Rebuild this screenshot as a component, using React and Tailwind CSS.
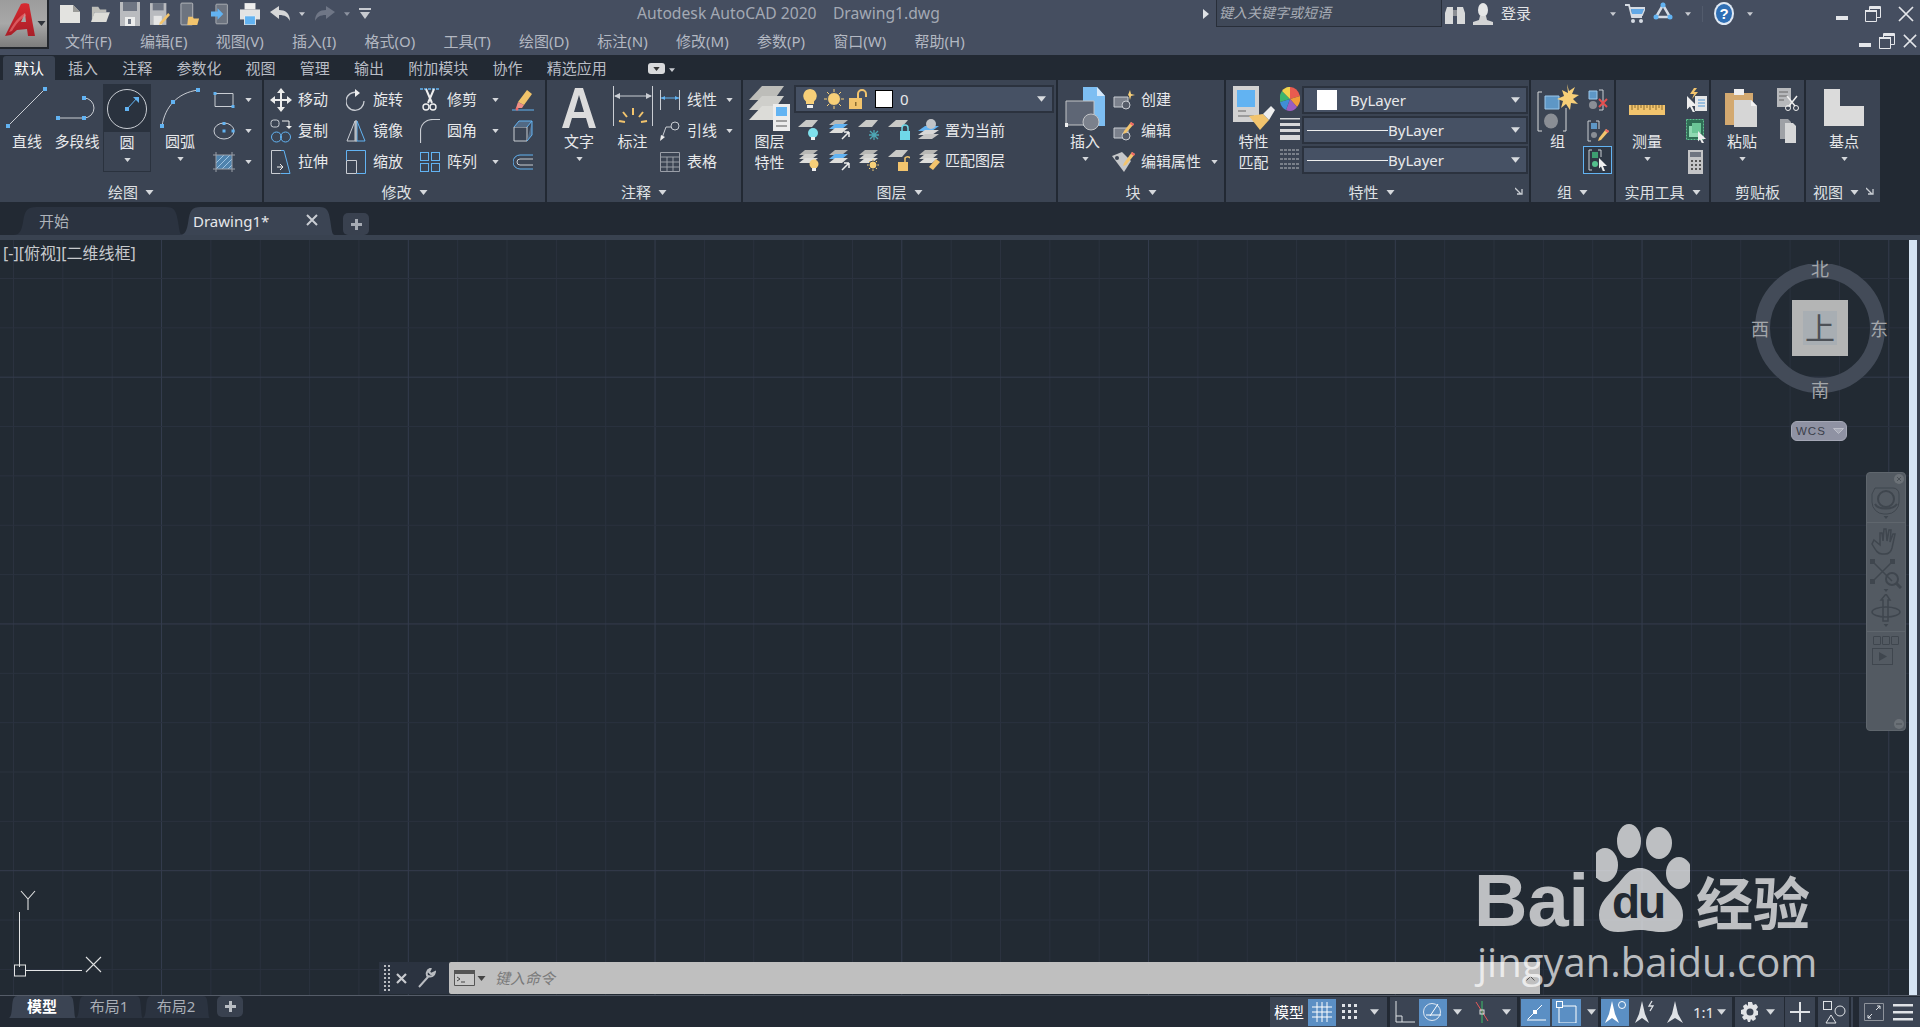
import React from 'react';

const BLUE = '#62b3f2';
const GR = '#c9cdd3';

function Caret({ w = 8, h = 5, c = '#d5d8dc' }) {
  return (
    <svg width={w} height={h} viewBox="0 0 8 5" className="shrink-0">
      <polygon points="0,0 8,0 4,5" fill={c} />
    </svg>
  );
}

function Node({ x, y, s = 4, c = BLUE }) {
  return <rect x={x - s / 2} y={y - s / 2} width={s} height={s} fill={c} />;
}

function Slot({ children }) {
  return <span className="w-[30px] flex justify-center shrink-0">{children}</span>;
}

/* ---------- quick access ---------- */
function Qat() {
  return (
    <div className="flex items-center h-[27px] pl-[6px]">
      <Slot><svg width="20" height="20" viewBox="0 0 20 20"><path d="M0 1h13l7 7v11H0z" fill="#e3e3e0" /><path d="M13 1v7h7z" fill="#9b9b98" /></svg></Slot>
      <Slot><svg width="20" height="18" viewBox="0 0 22 20"><path d="M2 2h7l2 3h7v3H5L2 18z" fill="#bdbdb8" /><path d="M5 8h17l-4 11H1z" fill="#ddddd8" /></svg></Slot>
      <Slot><svg width="20" height="24" viewBox="0 0 20 24"><path d="M0 0h20v24H0z" fill="#b9bbbf" /><path d="M3 0h14v9H3z" fill="#6e7583" /><path d="M5 15h10v9H5z" fill="#eceded" /><path d="M8 17h3v5H8z" fill="#6e7583" /></svg></Slot>
      <Slot><svg width="20" height="24" viewBox="0 0 22 24"><path d="M0 0h18v24H0z" fill="#b9bbbf" /><path d="M3 0h12v8H3z" fill="#6e7583" /><path d="M4 14h9v10H4z" fill="#e5e5e5" /><path d="M20 11l2 2-9 10-3 1 1-3z" fill="#f2c46d" /></svg></Slot>
      <Slot><svg width="20" height="24" viewBox="0 0 22 24"><rect x="1" y="0" width="13" height="24" rx="1" fill="#6d7480" stroke="#b9bbbf" /><path d="M9 15h5l1 2h6l-2 7H8z" fill="#f2c46d" /></svg></Slot>
      <Slot><svg width="18" height="24" viewBox="0 0 22 24"><rect x="6" y="0" width="14" height="24" rx="1" fill="#6d7480" stroke="#b9bbbf" /><path d="M0 9h8V5l7 7-7 7v-4H0z" fill={BLUE} /></svg></Slot>
      <Slot><svg width="20" height="22" viewBox="0 0 22 24"><path d="M5 0h12v7H5z" fill="#eee" /><path d="M0 7h22v11H0z" fill="#e3e3e3" /><path d="M5 14h12v10H5z" fill={BLUE} stroke="#eee" /></svg></Slot>
      <Slot><svg width="20" height="15" viewBox="0 0 20 15"><path d="M0 6l9-6v4c6 0 11 3 11 11-2-4-5-6-11-6v4z" fill="#d6d7d8" /></svg></Slot>
      <span className="ml-[4px]"><Caret w={6} h={4} c="#c7cad0" /></span>
      <svg width="20" height="15" viewBox="0 0 20 15" className="ml-[10px]"><path d="M20 6l-9-6v4C5 4 0 7 0 15c2-4 5-6 11-6v4z" fill="#6f7686" /></svg>
      <span className="ml-[9px]"><Caret w={6} h={4} c="#8d93a0" /></span>
      <svg width="12" height="11" viewBox="0 0 12 11" className="ml-[9px]"><path d="M0 0h12v2H0z" fill="#c7cad0" /><path d="M1 4h10l-5 7z" fill="#c7cad0" /></svg>
    </div>
  );
}

/* ---------- title and menu ---------- */
function WinButtons({ gap, mini }) {
  return (
    <div className={`flex items-center ${gap}`}>
      <svg width="12" height="4" viewBox="0 0 12 4" className="self-end mb-[2px]"><rect width="12" height="4" fill="#e4e6ea" /></svg>
      <svg width="16" height="16" viewBox="0 0 16 16"><path d="M4.500 4.500v-4h11v11h-4M.5 4.500h11v11H.5z" fill="none" stroke="#e4e6ea" /><path d="M4 1h12v2H4zM0 4h12v2H0z" fill="#e4e6ea" /></svg>
      <svg width={mini ? 14 : 16} height={mini ? 14 : 16} viewBox="0 0 16 16"><path d="M1 1l14 14M15 1L1 15" stroke="#e4e6ea" strokeWidth="1.700" /></svg>
    </div>
  );
}

function TitleBar() {
  const menus = ['文件(F)', '编辑(E)', '视图(V)', '插入(I)', '格式(O)', '工具(T)', '绘图(D)', '标注(N)', '修改(M)', '参数(P)', '窗口(W)', '帮助(H)'];
  return (
    <div className="h-[55px] bg-[#454e60] flex shrink-0">
      <div className="w-[49px] h-[49px] bg-gradient-to-b from-[#9c9c9c] via-[#a8a8a8] to-[#7d7d7d] border-r-2 border-b-2 border-[#22262d] relative shrink-0">
        <svg className="absolute left-[4px] top-[3px]" width="32" height="33" viewBox="0 0 32 33">
          <defs>
            <linearGradient id="acad" x1="0" y1="0" x2="0" y2="1">
              <stop offset="0" stopColor="#d82a30" />
              <stop offset="1" stopColor="#a81e28" />
            </linearGradient>
          </defs>
          <path fillRule="evenodd" d="M1 33L17 1c2-1 6-1 8 0l6 32h-7l-1-7-10 1-6 5zM17 19h5l-1-9z" fill="url(#acad)" />
          <path d="M5 29c5-10 10-15 16-19l1 3c-6 3-10 8-14 15z" fill="#ef7b7e" opacity=".6" />
        </svg>
        <span className="absolute left-[37px] top-[21px]"><Caret w={9} h={5} c="#30343b" /></span>
      </div>
      <div className="flex-1 flex flex-col min-w-0">
        <div className="flex h-[27px] items-center">
          <div className="w-[588px] shrink-0"><Qat /></div>
          <div className="text-[15.700px] leading-[27px] text-[#a3a9b4] w-[566px] shrink-0 whitespace-pre">{'Autodesk AutoCAD 2020    Drawing1.dwg'}</div>
          <svg width="6" height="10" viewBox="0 0 6 10" className="shrink-0"><polygon points="0,0 6,5 0,10" fill="#dfe2e6" /></svg>
          <div className="ml-[7px] w-[226px] h-[27px] border-l border-b border-r border-[#282e39] bg-[#3f4858] pl-[2px] text-[14px] leading-[25px] italic text-[#a7acb5] shrink-0">键入关键字或短语</div>
          <svg width="20" height="20" viewBox="0 0 20 20" className="ml-[3px]"><path d="M2 3h6v17H0V9zM12 3h6l2 6v11h-8z" fill="#d8d9da" /><path d="M8 6h4v6H8z" fill="#8c8f94" /></svg>
          <svg width="20" height="22" viewBox="0 0 20 22" className="ml-[8px]"><ellipse cx="10" cy="7" rx="5" ry="7" fill="#e5e6e7" /><path d="M7 13h6l1 4 6 2v3H0v-3l6-2z" fill="#d3d4d5" /></svg>
          <span className="ml-[8px] text-[15px] leading-[27px] text-[#e1e3e6] w-[109px] shrink-0">登录</span>
          <Caret w={6} h={4} c="#c7cad0" />
          <svg width="20" height="21" viewBox="0 0 20 21" className="ml-[9px]"><path d="M0 2h4l3 12h10M5 5h15l-3 7H7" fill="none" stroke="#d6dbe3" strokeWidth="1.800" /><path d="M6 6h13l-2 5H7z" fill="#62a8e6" /><circle cx="8" cy="18" r="2" fill="#d6dbe3" /><circle cx="16" cy="18" r="2" fill="#d6dbe3" /></svg>
          <svg width="20" height="18" viewBox="0 0 20 18" className="ml-[8px] mb-[6px]"><path d="M10 3L3 15h14z" fill="none" stroke="#d5dbe4" strokeWidth="2.500" /><circle cx="10" cy="3" r="2.500" fill={BLUE} /><circle cx="3" cy="15" r="2.500" fill={BLUE} /><circle cx="17" cy="15" r="2.500" fill={BLUE} /></svg>
          <span className="ml-[12px]"><Caret w={6} h={4} c="#c7cad0" /></span>
          <div className="w-px h-[16px] bg-[#525b6c] ml-[11px]" />
          <svg width="20" height="23" viewBox="0 0 20 23" className="ml-[11px]"><ellipse cx="10" cy="11.500" rx="10" ry="11.500" fill="#dfe8f3" /><ellipse cx="10" cy="11.500" rx="8" ry="9.500" fill="#2f6fb5" /><text x="10" y="17" textAnchor="middle" fontSize="15" fontWeight="700" fill="#fff" fontFamily="Liberation Sans">?</text></svg>
          <span className="ml-[13px]"><Caret w={6} h={4} c="#c7cad0" /></span>
          <div className="ml-auto mr-[6px]"><WinButtons gap="gap-[17px]" /></div>
        </div>
        <div className="flex items-center h-[28px]">
          <nav className="flex pl-[16px] gap-[28.300px] text-[15px] leading-[28px] text-[#b3b8c2]">
            {menus.map((m) => <span key={m} className="whitespace-nowrap">{m}</span>)}
          </nav>
          <div className="ml-auto mr-[3px]"><WinButtons gap="gap-[8px]" mini /></div>
        </div>
      </div>
    </div>
  );
}

/* ---------- ribbon tabs ---------- */
function RibbonTabs() {
  const tabs = ['插入', '注释', '参数化', '视图', '管理', '输出', '附加模块', '协作', '精选应用'];
  return (
    <div className="h-[25px] bg-[#222933] flex items-end pl-[3px] shrink-0">
      <div className="w-[52px] h-[24px] bg-[#3b4453] rounded-t-[3px] text-center text-[15px] leading-[24px] text-white">默认</div>
      <div className="flex pl-[13px] gap-[24.200px] text-[15px] leading-[24px] text-[#b9bdc5]">
        {tabs.map((t) => <span key={t} className="whitespace-nowrap">{t}</span>)}
      </div>
      <div className="ml-[41px] mb-[6px] w-[17px] h-[11px] rounded-[3px] bg-[#d8d9db] flex items-center justify-center"><Caret w={7} h={4} c="#333" /></div>
      <span className="ml-[4px] mb-[8px]"><Caret w={6} h={4} c="#c7cad0" /></span>
    </div>
  );
}

/* ---------- ribbon primitives ---------- */
function Panel({ w, title, more, tp = '', children }) {
  return (
    <div className={`${w} shrink-0 bg-[#3b4453] border-r-2 border-[#222933] flex flex-col relative`}>
      <div className="h-[102px] flex pt-[4px]">{children}</div>
      <div className={`h-[20px] flex items-center justify-center gap-[7px] text-[15px] leading-[20px] text-[#dfe1e4] ${tp}`}>
        <span>{title}</span>
        {more !== false && <Caret w={9} h={5} />}
      </div>
      {more === 'launch' && (
        <svg width="8" height="8" viewBox="0 0 8 8" className="absolute right-[6px] bottom-[7px]"><path d="M0 1l6 6M7 2v5H2" stroke="#c9cdd3" fill="none" strokeWidth="1.300" /></svg>
      )}
    </div>
  );
}

function Big({ w, icon, label, label2, arrow, active }) {
  return (
    <div className={`${w} shrink-0 flex flex-col items-center ${active ? 'h-[88px] border border-[#2a323e]' : ''}`}>
      <div className={`h-[47px] w-full flex items-center justify-center shrink-0 ${active ? 'bg-[#2a323e]' : ''}`}>{icon}</div>
      <div className="text-[15px] leading-[21px] text-[#e8e9eb] whitespace-nowrap">{label}</div>
      {label2 && <div className="text-[15px] leading-[21px] text-[#e8e9eb] whitespace-nowrap">{label2}</div>}
      {arrow && <div className="mt-[5px]"><Caret w={7} h={4} /></div>}
    </div>
  );
}

function Row({ icon, text, arrow, w = 'w-[24px]', ar = 'ml-auto' }) {
  return (
    <div className="h-[31px] flex items-center">
      <span className={`${w} flex justify-center shrink-0`}>{icon}</span>
      {text && <span className="ml-[5px] mb-[2px] text-[15px] leading-[20px] text-[#e8e9eb] whitespace-nowrap">{text}</span>}
      {arrow && <span className={ar}><Caret w={7} h={4} /></span>}
    </div>
  );
}

/* ---------- icons ---------- */
const Ic = {
  line: <svg width="48" height="46" viewBox="0 0 48 46"><path d="M5 41L42 4" stroke={GR} /><Node x={5} y={41} /><Node x={42} y={4} /></svg>,
  pline: <svg width="46" height="46" viewBox="0 0 46 46"><path d="M4 33h26a10 10 0 0 0 0-20" fill="none" stroke={GR} /><Node x={4} y={33} /><Node x={30} y={33} /><Node x={30} y={13} /></svg>,
  circle: <svg width="44" height="44" viewBox="0 0 44 44"><circle cx="22" cy="22" r="19.500" fill="none" stroke={GR} /><path d="M22 22l11-12" stroke={BLUE} /><path d="M28 10h6v6z" fill={BLUE} /><Node x={22} y={22} /></svg>,
  arc: <svg width="46" height="46" viewBox="0 0 46 46"><path d="M5 41C8 22 20 8 41 5" fill="none" stroke={GR} /><Node x={5} y={41} /><Node x={16} y={17} /><Node x={41} y={5} /></svg>,
  rect: <svg width="22" height="16" viewBox="0 0 22 16"><path d="M2 1.500h18v13H2z" fill="none" stroke={GR} /><Node x={2} y={1.500} s={3} /><Node x={20} y={14.500} s={3} /></svg>,
  ellipse: <svg width="22" height="18" viewBox="0 0 22 18"><ellipse cx="11" cy="9" rx="10" ry="8" fill="none" stroke={GR} /><Node x={11} y={9} s={3} /><Node x={11} y={1.500} s={3} /><Node x={20} y={9} s={3} /></svg>,
  hatch: <svg width="22" height="20" viewBox="0 0 22 20"><path d="M3 3h16v14H3z" fill="#4f83ad" /><path d="M3 11l8-8M3 17L17 3M9 17L19 7M15 17l4-4" stroke="#9fc4e2" /><path d="M3 0v20M19 0v20M0 3h22M0 17h22" stroke="#9a9fa8" /></svg>,
  move: <svg width="22" height="24" viewBox="0 0 22 24"><path d="M11 0l4 5h-3v6h5V8l5 4-5 4v-3h-5v6h3l-4 5-4-5h3v-6H5v3l-5-4 5-4v3h5V5H7z" fill="#eceded" /></svg>,
  rotate: <svg width="20" height="22" viewBox="0 0 20 22"><path d="M11 3.500A9 9 0 1 0 18 12" fill="none" stroke={GR} strokeWidth="1.300" /><path d="M9 0l5 4-5 4z" fill="#eee" /></svg>,
  trim: <svg width="20" height="24" viewBox="0 0 20 24"><path d="M0 1h20" stroke={BLUE} strokeDasharray="3 1" strokeWidth="1.500" /><path d="M6 1l6 14M14 1L8 15" stroke="#eee" strokeWidth="2" /><circle cx="6" cy="19" r="3" fill="none" stroke="#eee" strokeWidth="1.400" /><circle cx="13" cy="19" r="3" fill="none" stroke="#eee" strokeWidth="1.400" /></svg>,
  erase: <svg width="22" height="22" viewBox="0 0 22 22"><path d="M15 1l5 4-8 11-6-3z" fill="#f0c36a" /><path d="M6 13l6 3-2 3H4z" fill="#ef8f86" /><path d="M0 21h22" stroke={BLUE} /><circle cx="5" cy="20" r="1.500" fill="#e66" /></svg>,
  copy: <svg width="22" height="24" viewBox="0 0 22 24"><rect x="1" y="1" width="8" height="7" rx="2.500" fill="none" stroke={GR} /><path d="M12 2h7v6" fill="none" stroke="#eee" /><path d="M16 7h6l-3 3z" fill="#eee" /><circle cx="6.500" cy="18" r="5" fill="none" stroke={BLUE} /><circle cx="15.500" cy="18" r="5" fill="none" stroke={BLUE} /></svg>,
  mirror: <svg width="20" height="22" viewBox="0 0 20 22"><path d="M9 1L1 21h8z" fill="none" stroke={GR} /><path d="M11 1l8 20h-8z" fill="none" stroke={BLUE} /><path d="M10 0v22" stroke="#eee" /></svg>,
  fillet: <svg width="20" height="24" viewBox="0 0 20 24"><path d="M.5 24V12C.5 5 6 .5 13 .5h7" fill="none" stroke={GR} strokeWidth="1.200" /></svg>,
  cube: <svg width="20" height="22" viewBox="0 0 20 22"><path d="M1 7h13v14H1z" fill="none" stroke={GR} /><path d="M1 7l5-6h13l-5 6M14 21l5-6V1" fill="#526983" stroke={BLUE} /></svg>,
  stretch: <svg width="20" height="24" viewBox="0 0 20 24"><path d="M10 .5H.5v23h9" fill="none" stroke={GR} /><path d="M10 .5h3l6 23h-9" fill="none" stroke={BLUE} /><path d="M6 17h5M9 14l3 3-3 3" stroke="#eee" fill="none" /></svg>,
  scale: <svg width="20" height="24" viewBox="0 0 20 24"><path d="M.5 10.500h10v13H.5z" fill="none" stroke={GR} /><path d="M.5 10.500V.5h19v23h-9" fill="none" stroke={BLUE} /></svg>,
  array: <svg width="20" height="20" viewBox="0 0 20 20"><rect x=".5" y=".5" width="8" height="8" fill="none" stroke={BLUE} /><rect x="11.500" y=".5" width="8" height="8" fill="none" stroke={BLUE} /><rect x=".5" y="11.500" width="8" height="8" fill="none" stroke={BLUE} /><rect x="11.500" y="11.500" width="8" height="8" fill="none" stroke={BLUE} /></svg>,
  offset: <svg width="20" height="16" viewBox="0 0 20 16"><path d="M20 1H7a7 7 0 0 0 0 14h13" fill="none" stroke={BLUE} /><path d="M20 5H7a3 3 0 0 0 0 6h13" fill="none" stroke={GR} /></svg>,
  text: <svg width="34" height="40" viewBox="0 0 34 40"><path d="M13 0h8l13 40h-7l-3-10H10L7 40H0zM12 24h10L17 7z" fill="#dcdcdc" /></svg>,
  dim: <svg width="40" height="44" viewBox="0 0 40 44"><path d="M.5 0v40M39.500 0v40" stroke={GR} /><path d="M2 10h36" stroke={GR} /><path d="M1 10l6-3v6zM39 10l-6-3v6z" fill={GR} /><path d="M20 22v7M10 26l4 5M30 26l-4 5M6 35l6 1M34 35l-6 1" stroke="#f2c46d" strokeWidth="2" fill="none" /></svg>,
  linear: <svg width="20" height="20" viewBox="0 0 20 20"><path d="M.5 0v20M19.500 0v20" stroke={GR} /><path d="M1 8h18" stroke={BLUE} /><path d="M1 8l4-2v4zM19 8l-4-2v4z" fill={BLUE} /></svg>,
  leader: <svg width="20" height="20" viewBox="0 0 20 20"><circle cx="15" cy="5" r="4" fill="none" stroke={GR} /><path d="M11 6H6L2 17" fill="none" stroke={GR} /><path d="M0 20l1-6 4 2z" fill="#eee" /></svg>,
  table: <svg width="20" height="20" viewBox="0 0 20 20"><path d="M.5.5h19v19H.5zM.5 5h19M.5 10h19M.5 15h19M7 5v15M13 5v15" fill="none" stroke="#9a9fa8" /></svg>,
  layerProp: <svg width="42" height="46" viewBox="0 0 42 46"><path d="M13 1h22l-10 14H0z" fill="#bdbdb9" /><path d="M13 11h22l-10 14H0z" fill="#cfcfcb" /><path d="M13 21h22l-10 14H0z" fill="#dcdcd8" /><path d="M24 19h17v27H24z" fill="#ececec" /><path d="M27 22h11v9H27z" fill={BLUE} /><path d="M27 36h11M27 41h11" stroke="#555" /></svg>,
  bulb: <svg width="14" height="20" viewBox="0 0 14 20"><path d="M7 0a7 7 0 0 1 4 12.500V15H3v-2.500A7 7 0 0 1 7 0z" fill="#f7cf78" /><path d="M4 16h6v3H4z" fill="#eee" /></svg>,
  sun: <svg width="20" height="20" viewBox="0 0 20 20"><path d="M10 0v20M0 10h20M3 3l14 14M17 3L3 17" stroke="#f7cf78" /><circle cx="10" cy="10" r="6.500" fill="#f7cf78" stroke="#465164" /></svg>,
  lock: <svg width="18" height="20" viewBox="0 0 18 20"><path d="M9 9V5a4 4 0 0 1 8 0v3" fill="none" stroke="#f2c46d" strokeWidth="2" /><path d="M0 9h13v11H0z" fill="#f2c46d" /><path d="M6 13h1.500v4H6z" fill="#8a6c30" /></svg>,
  insert: <svg width="40" height="46" viewBox="0 0 40 46"><path d="M18 2h14l8 9v30H18z" fill="#7dbef2" /><path d="M32 2v9h8z" fill="#d6e9fa" /><path d="M1 16h28v24H1z" fill="#5e6675" stroke="#c2c4c7" /><circle cx="26" cy="37" r="8" fill="#7b818c" stroke="#c2c4c7" /><Node x={1} y={40} s={4} c="#eee" /></svg>,
  create: <svg width="22" height="20" viewBox="0 0 22 20"><path d="M1 7h14v10H1z" fill="#7b818c" stroke={GR} /><circle cx="13" cy="15" r="4" fill="#555c69" stroke={GR} /><path d="M15 5l2-5 1 4 4 1-4 1-1 4-1-4z" fill="#f7cf78" /></svg>,
  edit: <svg width="22" height="20" viewBox="0 0 22 20"><path d="M1 7h14v10H1z" fill="#7b818c" stroke={GR} /><circle cx="13" cy="15" r="4" fill="#555c69" stroke={GR} /><path d="M18 1l3 2-8 9-3 1 1-3z" fill="#f2c46d" /><path d="M18 1l3 2-1 2-3-2z" fill="#e66" /></svg>,
  attedit: <svg width="24" height="22" viewBox="0 0 24 22"><path d="M0 5l10-4 9 9-7 11z" fill="#c5c7c9" /><circle cx="5" cy="7" r="2" fill="#3b4453" /><path d="M20 1l3 2-9 11-3 1 1-3z" fill="#f2c46d" /><path d="M20 1l3 2-1 2-3-2z" fill="#e66" /></svg>,
  match: <svg width="42" height="44" viewBox="0 0 42 44"><path d="M0 0h26v36H0z" fill="#d2d2d2" /><path d="M4 4h18v17H4z" fill={BLUE} /><path d="M5 25h8M5 30h16" stroke="#666" /><path d="M16 30l14-2 6 6-9 10z" fill="#f2c46d" /><path d="M30 28l8-8 4 4-6 10z" fill="#eee" /></svg>,
  wheel: <svg width="20" height="24" viewBox="0 0 20 24"><path d="M10 12L10 0A10 12 0 0 1 20 9z" fill="#e95b4f" /><path d="M10 12L20 9A10 12 0 0 1 17 20z" fill="#f29b38" /><path d="M10 12L17 20A10 12 0 0 1 6 23z" fill="#9a5dc0" /><path d="M10 12L6 23A10 12 0 0 1 0 15z" fill="#3f8fd6" /><path d="M10 12L0 15A10 12 0 0 1 2 4z" fill="#3cb56e" /><path d="M10 12L2 4A10 12 0 0 1 10 0z" fill="#f2d24c" /></svg>,
  lw: <svg width="20" height="22" viewBox="0 0 20 22"><path d="M0 0h20v1.500H0zM0 5h20v3H0zM0 11h20v3H0zM0 17h20v5H0z" fill="#d7d8da" /></svg>,
  lt: <svg width="20" height="20" viewBox="0 0 20 20"><path d="M0 1h20M0 5h20M0 10h20M0 15h20M0 19h20" stroke="#b8bbc0" strokeDasharray="3 1" /></svg>,
  group: <svg width="42" height="48" viewBox="0 0 42 48"><path d="M5 8H1v39h4M26 47h3V24" fill="none" stroke="#d8d9db" /><path d="M8 12h14v13H8z" fill="#5e97c6" stroke="#9cc7ea" /><ellipse cx="14" cy="37" rx="7" ry="7.500" fill="#8a8e95" /><path d="M30 0l2 7 6-4-3 7 7 1-6 4 5 5-7-1-1 7-4-6-5 4 2-7-6-2 7-3-2-6 6 3z" fill="#f7cf78" /></svg>,
  ungroup: <svg width="20" height="22" viewBox="0 0 20 22"><path d="M11 1h4v20h-4" fill="none" stroke={GR} /><path d="M1 2h8v8H1z" fill="#5e97c6" stroke="#9cc7ea" /><circle cx="5" cy="16" r="4" fill="#8a8e95" /><path d="M11 10l8 8M19 10l-8 8" stroke="#e54f4f" strokeWidth="2" /></svg>,
  groupEdit: <svg width="22" height="22" viewBox="0 0 22 22"><path d="M4 1H1v20h3M9 1h3v8" fill="none" stroke={GR} /><path d="M4 3h6v6H4z" fill="#5e97c6" /><circle cx="7" cy="15" r="3" fill="#8a8e95" /><path d="M19 9l3 2-8 9-3 1 1-3z" fill="#f2c46d" /><path d="M19 9l3 2-1 2-3-2z" fill="#e66" /></svg>,
  groupSel: <svg width="20" height="22" viewBox="0 0 20 22"><path d="M4 1H1v20h3M10 1h3v7" fill="none" stroke={GR} /><path d="M4 3h6v6H4z" fill="#3d9d71" /><circle cx="7" cy="15" r="3" fill="#54c08e" /><path d="M11 9l8 8h-4l2 5-2 .500-2-5-2 2z" fill="#eee" /></svg>,
  ruler: <svg width="36" height="12" viewBox="0 0 36 12"><path d="M0 0h36v10H0z" fill="#f2c46d" /><path d="M3 0v5M6 0v3M9 0v5M12 0v3M15 0v5M18 0v3M21 0v5M24 0v3M27 0v5M30 0v3M33 0v5" stroke="#8a6c30" /></svg>,
  qs: <svg width="22" height="24" viewBox="0 0 22 24"><path d="M10 8h12v15H10z" fill="#e5e6e7" /><path d="M13 12h7M13 15h7M13 18h7" stroke="#4f96d6" /><path d="M2 8l10 10H7l3 6-2 .500-3-6-3 3z" fill="#eee" /><path d="M9 0L5 6h4l-2 5 6-7H9l3-4z" fill="#f2c46d" /></svg>,
  selSim: <svg width="20" height="24" viewBox="0 0 20 24"><rect x=".5" y=".5" width="17" height="20" fill="#2f6e55" stroke="#5cc08f" strokeDasharray="2 1" /><path d="M3 7h9v11H3z" fill="#8fd9b2" /><path d="M6 4h9v10H6z" fill="#6ac596" /><path d="M12 12l8 8h-4l2 4-2 .500-2-4-2 2z" fill="#eee" /></svg>,
  calc: <svg width="16" height="24" viewBox="0 0 16 24"><path d="M0 0h15v24H0z" fill="#c4c5c7" /><path d="M2 2h11v5H2z" fill="#6e7480" /><path d="M3 10h2v2H3zM7 10h2v2H7zM11 10h2v2h-2zM3 14h2v2H3zM7 14h2v2H7zM11 14h2v2h-2zM3 18h2v2H3zM7 18h2v2H7zM11 18h2v2h-2z" fill="#555" /></svg>,
  paste: <svg width="34" height="38" viewBox="0 0 34 38"><path d="M0 4h28v32H0z" fill="#d3a970" /><path d="M9 0h10v6H9z" fill="#eee" /><path d="M9 11h17l6 6v21H9z" fill="#d6d6d6" /><path d="M26 11v6h6z" fill="#f2f2f2" /></svg>,
  cut: <svg width="22" height="24" viewBox="0 0 22 24"><path d="M0 0h14v19H0z" fill="#b7b9bc" /><path d="M2 4h9M2 8h9M2 12h5" stroke="#666" /><path d="M10 8l8 10M20 8l-8 10" stroke="#eee" strokeWidth="1.500" /><circle cx="11" cy="20" r="2.500" fill="none" stroke="#eee" /><circle cx="19" cy="20" r="2.500" fill="none" stroke="#eee" /></svg>,
  copyClip: <svg width="16" height="24" viewBox="0 0 16 24"><path d="M0 0h8l3 3v17H0z" fill="#9ea1a6" /><path d="M5 4h8l3 3v17H5z" fill="#d6d7d8" /></svg>,
  basept: <svg width="40" height="37" viewBox="0 0 40 37"><path d="M0 0h16v17h24v20H0z" fill="#dbdbdb" /></svg>,
};

function Layer({ kind }) {
  const stack = (
    <>
      <path d="M7 1h13l-6 5H1z" fill="#b8b8b5" />
      <path d="M7 5h13l-6 5H1z" fill={kind === 's1' || kind === 's2' ? BLUE : '#d0d0cd'} />
      <path d="M7 9h13l-6 5H1z" fill="#dedeDB" />
    </>
  );
  const plate = <path d="M8 1h12l-6 7H0z" fill="#c9c9c6" />;
  const glyphs = {
    on: <>{plate}<circle cx="15" cy="14" r="5" fill="#7fe0ec" /><path d="M13 18h4v3h-4z" fill="#eee" /></>,
    s1: <>{stack}<path d="M14 20l7-7M21 13v5M21 13h-5" stroke="#eee" strokeWidth="1.500" /></>,
    fr: <>{plate}<path d="M16 11v10M11 16h10M12 12l8 8M20 12l-8 8" stroke="#4ea7b5" strokeWidth="1.300" /></>,
    lk: <>{plate}<path d="M14 12V9a3 3 0 0 1 6 0v3" fill="none" stroke="#6fd8e8" strokeWidth="1.500" /><path d="M12 12h10v9H12z" fill="#6fd8e8" /></>,
    cur: <><path d="M7 7h14l-7 5H0z" fill={BLUE} /><path d="M7 11h14l-7 5H0z" fill="#d8d8d8" /><path d="M7 15h14l-7 5H0z" fill="#c6c6c6" /><circle cx="13" cy="5" r="5" fill="#c2c4c7" /></>,
    bl: <>{stack}<circle cx="16" cy="15" r="4.500" fill="#f7cf78" /><path d="M14 19h4v3h-4z" fill="#eee" /></>,
    s2: <>{stack}<path d="M14 21l7-7M21 14v5M21 14h-5" stroke="#eee" strokeWidth="1.500" /></>,
    su: <>{stack}<path d="M15 10v12M9 16h12M11 12l8 8M19 12l-8 8" stroke="#f7cf78" /><circle cx="15" cy="16" r="4" fill="#f7cf78" stroke="#3b4453" /></>,
    ul: <>{plate}<path d="M17 13V9a3 3 0 0 1 5 0" fill="none" stroke="#f2c46d" strokeWidth="1.500" /><path d="M10 13h10v9H10z" fill="#f2c46d" /></>,
    ma: <>{stack}<path d="M18 10l4 3-7 8-4-3z" fill="#f2c46d" /></>,
  };
  return <svg width="22" height="23" viewBox="0 0 22 23">{glyphs[kind]}</svg>;
}

function Combo({ w, h, children }) {
  return (
    <div className={`${w} ${h} bg-[#465164] border-2 border-[#2b323e] flex items-center relative`}>
      {children}
      <span className="absolute right-[6px] top-1/2 -translate-y-1/2"><Caret w={9} h={6} c="#d9dce0" /></span>
    </div>
  );
}

function Ribbon() {
  return (
    <div className="h-[122px] bg-[#222933] flex shrink-0">
      <Panel w="w-[264px]" title="绘图">
        <div className="flex w-[263px]">
          <div className="w-[3px]" />
          <Big w="w-[48px]" icon={Ic.line} label="直线" />
          <Big w="w-[48px] ml-[2px]" icon={Ic.pline} label="多段线" />
          <Big w="w-[48px] ml-[2px]" icon={Ic.circle} label="圆" arrow active />
          <Big w="w-[48px] ml-[5px]" icon={Ic.arc} label="圆弧" arrow />
          <div className="w-[40px] ml-[8px]">
            <Row icon={Ic.rect} arrow />
            <Row icon={Ic.ellipse} arrow />
            <Row icon={Ic.hatch} arrow />
          </div>
        </div>
      </Panel>
      <Panel w="w-[283px]" title="修改">
        <div className="flex pl-[5px]">
          <div className="w-[75px]">
            <Row icon={Ic.move} text="移动" />
            <Row icon={Ic.copy} text="复制" />
            <Row icon={Ic.stretch} text="拉伸" />
          </div>
          <div className="w-[74px]">
            <Row icon={Ic.rotate} text="旋转" />
            <Row icon={Ic.mirror} text="镜像" />
            <Row icon={Ic.scale} text="缩放" />
          </div>
          <div className="w-[81px]">
            <Row icon={Ic.trim} text="修剪" arrow />
            <Row icon={Ic.fillet} text="圆角" arrow />
            <Row icon={Ic.array} text="阵列" arrow />
          </div>
          <div className="w-[24px] ml-[12px]">
            <Row icon={Ic.erase} />
            <Row icon={Ic.cube} />
            <Row icon={Ic.offset} />
          </div>
        </div>
      </Panel>
      <Panel w="w-[196px]" title="注释">
        <div className="flex">
          <Big w="w-[64px]" icon={Ic.text} label="文字" arrow />
          <Big w="w-[43px]" icon={Ic.dim} label="标注" />
          <div className="w-[83px] ml-[4px]">
            <Row icon={Ic.linear} text="线性" arrow ar="ml-[9px]" />
            <Row icon={Ic.leader} text="引线" arrow ar="ml-[9px]" />
            <Row icon={Ic.table} text="表格" />
          </div>
        </div>
      </Panel>
      <Panel w="w-[315px]" title="图层">
        <div className="flex pl-[2px]">
          <Big w="w-[49px]" icon={Ic.layerProp} label="图层" label2="特性" />
          <div className="w-[260px] pt-[1px]">
            <Combo w="w-[260px]" h="h-[28px]">
              <span className="w-[28px] flex justify-center">{Ic.bulb}</span>
              <span className="w-[20px] flex justify-center">{Ic.sun}</span>
              <span className="w-[28px] flex justify-center">{Ic.lock}</span>
              <span className="w-[18px] h-[18px] bg-white border border-black ml-[3px]" />
              <span className="ml-[7px] text-[15px] text-[#e8e9eb]">0</span>
            </Combo>
            <div className="flex items-center h-[30px] mt-[2px]">
              {['on', 's1', 'fr', 'lk', 'cur'].map((k) => <span key={k} className="w-[30px] flex justify-center"><Layer kind={k} /></span>)}
              <span className="ml-[1px] text-[15px] text-[#e8e9eb]">置为当前</span>
            </div>
            <div className="flex items-center h-[31px]">
              {['bl', 's2', 'su', 'ul', 'ma'].map((k) => <span key={k} className="w-[30px] flex justify-center"><Layer kind={k} /></span>)}
              <span className="ml-[1px] text-[15px] text-[#e8e9eb]">匹配图层</span>
            </div>
          </div>
        </div>
      </Panel>
      <Panel w="w-[168px]" title="块">
        <div className="flex pl-[5px]">
          <Big w="w-[44px]" icon={Ic.insert} label="插入" arrow />
          <div className="w-[110px] ml-[5px]">
            <Row icon={Ic.create} text="创建" />
            <Row icon={Ic.edit} text="编辑" />
            <Row icon={Ic.attedit} text="编辑属性" arrow ar="ml-[10px]" />
          </div>
        </div>
      </Panel>
      <Panel w="w-[305px]" title="特性" more="launch" tp="pr-[12px]">
        <div className="flex pl-[2px]">
          <Big w="w-[48px] pl-[3px]" icon={Ic.match} label="特性" label2="匹配" />
          <div className="w-[26px]">
            <div className="h-[30px] flex items-center justify-center pl-[2px]">{Ic.wheel}</div>
            <div className="h-[30px] flex items-center justify-center pl-[2px]">{Ic.lw}</div>
            <div className="h-[30px] flex items-center justify-center pl-[2px]">{Ic.lt}</div>
          </div>
          <div className="flex flex-col gap-[2px] pt-[2px]">
            <Combo w="w-[226px]" h="h-[28px]">
              <span className="ml-[13px] w-[20px] h-[20px] bg-white" />
              <span className="ml-[13px] text-[15px] text-[#e8e9eb]">ByLayer</span>
            </Combo>
            <Combo w="w-[226px]" h="h-[28px]">
              <span className="ml-[3px] w-[81px] h-px bg-[#eee]" />
              <span className="text-[15px] text-[#e8e9eb]">ByLayer</span>
            </Combo>
            <Combo w="w-[226px]" h="h-[28px]">
              <span className="ml-[3px] w-[81px] h-px bg-[#eee]" />
              <span className="text-[15px] text-[#e8e9eb]">ByLayer</span>
            </Combo>
          </div>
        </div>
      </Panel>
      <Panel w="w-[85px]" title="组">
        <div className="flex pl-[3px]">
          <Big w="w-[47px]" icon={Ic.group} label="组" />
          <div className="w-[29px] ml-[2px] flex flex-col items-center">
            <div className="h-[31px] flex items-center">{Ic.ungroup}</div>
            <div className="h-[31px] flex items-center">{Ic.groupEdit}</div>
            <div className="h-[28px] w-[29px] flex items-center justify-center border border-[#62b3f2] bg-[#2f3845]">{Ic.groupSel}</div>
          </div>
        </div>
      </Panel>
      <Panel w="w-[95px]" title="实用工具">
        <div className="flex">
          <Big w="w-[62px]" icon={<span className="mt-[6px]">{Ic.ruler}</span>} label="测量" arrow />
          <div className="w-[30px] ml-[3px] flex flex-col items-center">
            <div className="h-[31px] flex items-center">{Ic.qs}</div>
            <div className="h-[31px] flex items-center">{Ic.selSim}</div>
            <div className="h-[31px] flex items-center">{Ic.calc}</div>
          </div>
        </div>
      </Panel>
      <Panel w="w-[95px]" title="剪贴板" more={false}>
        <div className="flex">
          <Big w="w-[62px]" icon={Ic.paste} label="粘贴" arrow />
          <div className="w-[26px] ml-[2px] flex flex-col items-center">
            <div className="h-[31px] flex items-center">{Ic.cut}</div>
            <div className="h-[31px] flex items-center">{Ic.copyClip}</div>
          </div>
        </div>
      </Panel>
      <Panel w="w-[76px] border-r-0" title="视图" more="launch" tp="pr-[14px]">
        <Big w="w-[76px]" icon={Ic.basept} label="基点" arrow />
      </Panel>
    </div>
  );
}

/* ---------- document tabs ---------- */
function TabShape({ fill }) {
  return (
    <svg className="absolute inset-0 w-full h-full" viewBox="0 0 100 28" preserveAspectRatio="none">
      <path d="M0 28C4 28 5 24 6 14 7 4 8 0 14 0H90C95 0 96 4 97 14 98 24 98 28 100 28Z" fill={fill} />
    </svg>
  );
}

function DocTabs() {
  return (
    <div className="h-[38px] bg-[#222933] shrink-0 flex flex-col">
      <div className="h-[33px] flex items-end pl-[13px]">
        <div className="relative w-[170px] h-[28px] shrink-0">
          <TabShape fill="#2b3340" />
          <span className="absolute left-[26px] top-[3px] text-[15px] leading-[22px] text-[#aeb3bb]">开始</span>
        </div>
        <div className="relative w-[156px] h-[28px] shrink-0 -ml-[4px]">
          <TabShape fill="#3b4453" />
          <span className="absolute left-[14px] top-[3px] text-[15px] leading-[22px] text-[#e6e7ea]">Drawing1*</span>
          <svg width="12" height="12" viewBox="0 0 12 12" className="absolute left-[127px] top-[7px]"><path d="M1 1l10 10M11 1L1 11" stroke="#c9cdd3" strokeWidth="2" /></svg>
        </div>
        <div className="w-[26px] h-[22px] bg-[#39414f] rounded-[5px] ml-[8px] flex items-center justify-center">
          <svg width="11" height="11" viewBox="0 0 11 11"><path d="M0 4h4V0h3v4h4v3H7v4H4V7H0z" fill="#a6abb3" /></svg>
        </div>
      </div>
      <div className="h-[5px] bg-[#394250]" />
    </div>
  );
}

/* ---------- canvas ---------- */
function Grid() {
  const xs = Array.from({ length: 40 }, (_, i) => 13.500 + i * 49.350);
  const ys = Array.from({ length: 16 }, (_, i) => 38.500 + i * 49.350);
  return (
    <svg className="absolute inset-0 w-full h-full">
      {xs.map((x, i) => <line key={i} x1={x} x2={x} y1={0} y2={760} stroke={i % 5 === 3 ? '#353c4e' : '#2b323f'} />)}
      {ys.map((y, i) => <line key={i} x1={0} x2={1910} y1={y} y2={y} stroke={i % 5 === 2 ? '#353c4e' : '#2b323f'} />)}
    </svg>
  );
}

function ViewCube() {
  return (
    <div className="absolute left-[1745px] top-[24px] w-[150px] h-[190px]">
      <svg className="absolute left-0 top-0" width="150" height="130" viewBox="0 0 150 130">
        <circle cx="75" cy="64" r="57.500" fill="none" stroke="#434b58" strokeWidth="15" />
      </svg>
      <span className="absolute left-[66px] top-[-7px] text-[18px] leading-[24px] text-[#a4a7ab]">北</span>
      <span className="absolute left-[66px] top-[114px] text-[18px] leading-[24px] text-[#a4a7ab]">南</span>
      <span className="absolute left-[6px] top-[53px] text-[18px] leading-[24px] text-[#a4a7ab]">西</span>
      <span className="absolute left-[125px] top-[53px] text-[18px] leading-[24px] text-[#a4a7ab]">东</span>
      <div className="absolute left-[47px] top-[36px] w-[56px] h-[56px] bg-[#b4b5b5] flex items-center justify-center">
        <div className="w-[34px] h-[34px] bg-[#a8aeb3] text-[#4d5157] text-[30px] leading-[34px] text-center">上</div>
      </div>
      <div className="absolute left-[46px] top-[157px] w-[56px] h-[20px] rounded-[6px] bg-[#8f92a3] border border-[#a5a8b6] flex items-center pl-[4px] gap-[7px]">
        <span className="text-[11.500px] leading-[18px] tracking-[1px] text-[#3b3f4a] font-['Liberation_Sans',sans-serif]">WCS</span>
        <svg width="11" height="6" viewBox="0 0 11 6"><path d="M.5.5h10l-5 5z" fill="#a5a8b6" stroke="#bbbdc8" /></svg>
      </div>
    </div>
  );
}

function NavBar() {
  const s = '#3f464e';
  return (
    <div className="absolute left-[1866px] top-[232px] w-[40px] h-[259px] rounded-[4px] bg-[#535a62] border border-[#5f666d] flex flex-col items-center">
      <svg width="10" height="10" viewBox="0 0 10 10" className="self-end mr-[1px] mt-[1px]"><circle cx="5" cy="5" r="5" fill="#6b7177" /><path d="M3 3l4 4M7 3l-4 4" stroke="#4a5056" /></svg>
      <svg width="30" height="30" viewBox="0 0 30 30" className="mt-[2px]"><path d="M4 2h18a6 6 0 0 1 6 6v8a12 12 0 0 1-12 12h-3A12 12 0 0 1 1 16V8z" fill="none" stroke={s} /><circle cx="15" cy="13" r="8" fill="none" stroke={s} strokeWidth="2" /><path d="M4 18c3 6 18 6 22 0" fill="none" stroke={s} strokeWidth="2" /></svg>
      <Caret w={6} h={3} c={s} />
      <div className="w-full h-px bg-[#5f666d] mt-[3px]" />
      <svg width="30" height="30" viewBox="0 0 30 30" className="mt-[2px]"><path d="M3 15l6 5 0-12 2 0 1 8 1-12h2l1 12 2-11h2l-1 12 3-8h2l-3 14c-1 4-3 6-7 6h-3c-4 0-6-3-10-10z" fill="none" stroke={s} strokeWidth="1.500" /></svg>
      <svg width="32" height="30" viewBox="0 0 32 30" className="mt-[4px]"><path d="M3 3l19 19M22 3L3 22" stroke={s} strokeWidth="1.500" /><path d="M0 0h5v5H0zM20 0h5v5h-5zM0 20h5v5H0z" fill={s} /><circle cx="22" cy="20" r="6" fill="none" stroke={s} strokeWidth="2" /><path d="M26 24l5 5" stroke={s} strokeWidth="3" /></svg>
      <Caret w={6} h={3} c={s} />
      <svg width="30" height="30" viewBox="0 0 30 30" className="mt-[2px]"><path d="M15 0l4 6h-2v21h-5V6h-2z" fill="none" stroke={s} strokeWidth="1.500" /><ellipse cx="15" cy="18" rx="14" ry="5" fill="none" stroke={s} strokeWidth="1.500" /></svg>
      <Caret w={6} h={3} c={s} />
      <div className="w-full h-px bg-[#5f666d] mt-[4px]" />
      <div className="flex gap-[1px] mt-[4px]">
        <span className="w-[8px] h-[9px] border border-[#3f464e] rounded-[1px]" />
        <span className="w-[8px] h-[9px] border border-[#3f464e] rounded-[1px]" />
        <span className="w-[8px] h-[9px] border border-[#3f464e] rounded-[1px]" />
      </div>
      <div className="self-start ml-[5px] mt-[3px] w-[21px] h-[17px] border border-[#3f464e] flex items-center justify-center">
        <svg width="8" height="9" viewBox="0 0 8 9"><polygon points="0,0 8,4.500 0,9" fill={s} /></svg>
      </div>
      <svg width="10" height="10" viewBox="0 0 10 10" className="self-end mr-[1px] mt-auto mb-[1px]"><circle cx="5" cy="5" r="5" fill="#6b7177" /><path d="M2 5h6" stroke="#4a5056" /></svg>
    </div>
  );
}

function Ucs() {
  return (
    <svg className="absolute left-0 top-[650px]" width="110" height="105" viewBox="0 0 110 105">
      <path d="M19.500 22v55M26 80.500h56" stroke="#e4e5e6" />
      <rect x="14.500" y="75" width="11" height="11" fill="none" stroke="#e4e5e6" />
      <path d="M21 1l7 8 7-8M28 9v11M86 67l15 15M101 67L86 82" fill="none" stroke="#dfe0e1" strokeWidth="1.100" />
    </svg>
  );
}

function CommandLine() {
  return (
    <div className="absolute left-[379px] top-[722px] w-[1161px] h-[32px] flex">
      <div className="w-[70px] h-full bg-[#2b3340] flex items-center shrink-0">
        <svg width="6" height="26" viewBox="0 0 6 26" className="ml-[5px]"><path d="M0 1h6M0 5h6M0 9h6M0 13h6M0 17h6M0 21h6M0 25h6" stroke="#b9bcc1" strokeDasharray="2 2" strokeWidth="2" /></svg>
        <svg width="11" height="11" viewBox="0 0 11 11" className="ml-[6px]"><path d="M1 1l9 9M10 1l-9 9" stroke="#c9cbcf" strokeWidth="2.200" /></svg>
        <svg width="18" height="20" viewBox="0 0 18 20" className="ml-[11px]"><path d="M1 19l9-10a5 5 0 0 1 2-8L13 0l-2 4 2 2 4-2a5 5 0 0 1-7 4" fill="none" stroke="#b9bcc1" strokeWidth="2" /></svg>
      </div>
      <div className="flex-1 bg-[#bfbfbf] flex items-center rounded-l-[2px]">
        <svg width="21" height="16" viewBox="0 0 21 16" className="ml-[5px]"><path d="M.5.5h20v15H.5z" fill="#c8c8c8" stroke="#555" /><path d="M0 0h21v4H0z" fill="#555" /><path d="M3 7l3 2-3 2M7 12h4" stroke="#444" fill="none" /></svg>
        <span className="ml-[2px]"><Caret w={9} h={5} c="#444" /></span>
        <span className="ml-[9px] text-[15px] leading-[20px] italic text-[#7a7a7a]">键入命令</span>
        <svg width="9" height="5" viewBox="0 0 9 5" className="ml-auto mr-[5px]"><path d="M.5 4.500l4-4 4 4" fill="none" stroke="#555" /></svg>
      </div>
    </div>
  );
}

function Watermark() {
  return (
    <div className="absolute left-[1470px] top-[590px] w-[360px] h-[160px] text-white/70 pointer-events-none">
      <svg className="absolute left-[126px] top-[-8px] opacity-70" width="94" height="113" viewBox="0 0 94 113">
        <ellipse cx="33" cy="19" rx="12" ry="17" fill="#fff" />
        <ellipse cx="63" cy="21" rx="13" ry="16" fill="#fff" />
        <ellipse cx="9" cy="43" rx="13" ry="17" fill="#fff" />
        <ellipse cx="83" cy="51" rx="13" ry="16" fill="#fff" />
        <path d="M44 46C56 46 60 56 68 64 78 74 87 80 87 93 87 106 76 110 66 110 56 110 52 108 44 108 36 108 30 110 22 110 10 110 3 104 3 93 3 80 12 74 20 64 28 56 32 46 44 46z" fill="#fff" />
      </svg>
      <span className="absolute left-[4px] top-[31px] text-[74px] leading-[80px] font-bold font-['Liberation_Sans',sans-serif]">Bai</span>
      <span className="absolute left-[142px] top-[42px] text-[46px] leading-[60px] font-bold text-[#222a33] tracking-[-2px] font-['Liberation_Sans',sans-serif]">du</span>
      <span className="absolute left-[226px] top-[38px] text-[57px] leading-[70px] font-bold">经验</span>
      <span className="absolute left-[7px] top-[108px] text-[40px] leading-[48px] font-['Open_Sans',sans-serif]">jingyan.baidu.com</span>
    </div>
  );
}

function Canvas() {
  return (
    <div className="flex-1 flex bg-[#222a33] min-h-0">
      <div className="flex-1 relative overflow-hidden">
        <Grid />
        <div className="absolute left-[3px] top-[3px] text-[16px] leading-[20px] text-[#c7c9cc]">[-][俯视][二维线框]</div>
        <ViewCube />
        <NavBar />
        <Ucs />
        <CommandLine />
        <Watermark />
      </div>
      <div className="w-[8px] bg-[#d6e4f3]" />
      <div className="w-[3px] bg-[#39414f]" />
    </div>
  );
}

/* ---------- bottom ---------- */
function LayoutTab({ active, children }) {
  return (
    <div className="relative w-[68px] h-[22px] shrink-0 -ml-[1px]">
      <TabShape fill={active ? '#3b4453' : '#2b3340'} />
      <span className={`absolute inset-0 text-center text-[15px] leading-[21px] ${active ? 'text-white font-bold' : 'text-[#a9aeb6]'}`}>{children}</span>
    </div>
  );
}

function SBtn({ w = 'w-[28px]', on, children }) {
  return <div className={`${w} h-[27px] shrink-0 flex items-center justify-center ${on ? 'bg-[#5b8fc4]' : ''}`}>{children}</div>;
}

const W = '#dfe2e6';

function StatusBar() {
  return (
    <div className="h-[32px] bg-[#222933] border-t border-[#555c68] flex shrink-0">
      <div className="flex pl-[9px] items-start h-[22px]">
        <LayoutTab active>模型</LayoutTab>
        <LayoutTab>布局1</LayoutTab>
        <LayoutTab>布局2</LayoutTab>
        <div className="w-[26px] h-[21px] bg-[#39414f] rounded-[5px] ml-[7px] flex items-center justify-center">
          <svg width="11" height="11" viewBox="0 0 11 11"><path d="M0 4h4V0h3v4h4v3H7v4H4V7H0z" fill="#b9bdc3" /></svg>
        </div>
      </div>
      <div className="ml-auto flex pt-[1px]">
        <div className="w-[117px] bg-[#3b4453] flex items-center">
          <span className="w-[38px] text-center text-[15px] leading-[20px] text-white shrink-0">模型</span>
          <SBtn on><svg width="20" height="20" viewBox="0 0 20 20"><path d="M5 0v20M10 0v20M15 0v20M0 5h20M0 10h20M0 15h20" stroke="#fff" /></svg></SBtn>
          <SBtn><svg width="16" height="16" viewBox="0 0 16 16"><path d="M0 0h3v3H0zM6 0h3v3H6zM12 0h3v3h-3zM0 6h3v3H0zM6 6h3v3H6zM12 6h3v3h-3zM0 12h3v3H0zM6 12h3v3H6zM12 12h3v3h-3z" fill={W} /></svg></SBtn>
          <span className="ml-[6px]"><Caret w={9} h={6} /></span>
        </div>
        <div className="w-[127px] ml-[3px] bg-[#3b4453] flex items-center pl-[1px]">
          <SBtn><svg width="20" height="22" viewBox="0 0 20 22"><path d="M1 0v21h19M1 15h6v6" fill="none" stroke={W} /></svg></SBtn>
          <SBtn on><svg width="22" height="22" viewBox="0 0 22 22"><circle cx="10" cy="11" r="8.500" fill="none" stroke="#dfe8f3" /><path d="M4 14h15M8 15l8-12" stroke="#fff" /></svg></SBtn>
          <span className="ml-[6px]"><Caret w={9} h={6} /></span>
          <SBtn w="w-[32px] ml-[4px]"><svg width="16" height="22" viewBox="0 0 16 22"><path d="M2 1l12 19" stroke="#e85a5a" /><path d="M8 0v22" stroke="#3fbf6b" /><rect x="6" y="9" width="4" height="4" fill="none" stroke="#e0e0e0" /></svg></SBtn>
          <span className="ml-[4px]"><Caret w={9} h={6} /></span>
        </div>
        <div className="w-[78px] ml-[3px] bg-[#3b4453] flex items-center">
          <SBtn w="w-[29px] ml-[1px]" on><svg width="20" height="20" viewBox="0 0 20 20"><path d="M1 18h19M2 17L16 3" stroke="#fff" /><rect x="7" y="8" width="4" height="4" fill="#fff" /></svg></SBtn>
          <SBtn w="w-[29px] ml-[2px]" on><svg width="22" height="22" viewBox="0 0 22 22"><path d="M3 5h17v17H3z" fill="none" stroke="#fff" /><rect x=".5" y=".5" width="6" height="6" fill="#5b8fc4" stroke="#fff" /></svg></SBtn>
          <span className="ml-[6px]"><Caret w={9} h={6} /></span>
        </div>
        <div className="w-[131px] ml-[3px] bg-[#3b4453] flex items-center">
          <SBtn on><svg width="24" height="24" viewBox="0 0 24 24"><path d="M9 1l3 13 4 9-7-5-7 5 4-9z" fill="#fff" /><circle cx="19" cy="5" r="3.500" fill="none" stroke="#fff" /></svg></SBtn>
          <SBtn w="w-[30px] ml-[1px]"><svg width="24" height="24" viewBox="0 0 24 24"><path d="M9 1l3 13 4 9-7-5-7 5 4-9z" fill={W} /><path d="M19 1l-3 5h4l-3 5" stroke={W} fill="none" strokeWidth="1.300" /></svg></SBtn>
          <SBtn w="w-[30px]"><svg width="20" height="24" viewBox="0 0 20 24"><path d="M10 1l3 13 5 9-8-5-8 5 5-9z" fill={W} /></svg></SBtn>
          <span className="ml-[3px] text-[15px] leading-[20px] text-[#e8e9eb]">1:1</span>
          <span className="ml-[3px]"><Caret w={9} h={6} /></span>
        </div>
        <div className="w-[49px] ml-[3px] bg-[#3b4453] flex items-center pl-[5px]">
          <svg width="20" height="20" viewBox="0 0 20 20"><path d="M8 0h4l1 3 3-1 2 3-2 3 2 1v4l-3 1 1 3-3 2-2-2-1 3H8l-1-3-3 1-2-3 2-2-3-1V8l3-1-1-3 3-2 2 2z" fill="#e1e3e6" /><circle cx="10" cy="10" r="3.500" fill="#3b4453" /></svg>
          <span className="ml-[6px]"><Caret w={9} h={6} /></span>
        </div>
        <div className="w-[30px] ml-[1px] bg-[#3b4453] flex items-center justify-center">
          <svg width="20" height="20" viewBox="0 0 20 20"><path d="M9 0h2v9h9v2h-9v9H9v-9H0V9h9z" fill="#dfe2e6" /></svg>
        </div>
        <div className="w-[31px] ml-[3px] bg-[#3b4453] flex items-center justify-center">
          <svg width="24" height="24" viewBox="0 0 24 24"><rect x="1.500" y="1.500" width="8" height="8" fill="none" stroke={W} /><circle cx="18" cy="11" r="5" fill="none" stroke={W} /><path d="M9 15l5 8H4z" fill="none" stroke={W} /></svg>
        </div>
        <div className="w-[2px] ml-[2px] bg-[#3b4453]" />
        <div className="w-[61px] ml-[6px] bg-[#3b4453] flex items-center pl-[5px] gap-[9px]">
          <svg width="20" height="18" viewBox="0 0 20 18"><path d="M.5.5h19v17H.5z" fill="none" stroke="#8e939b" /><path d="M12 7l4-4M13 3h3v3M8 11l-4 4M4 12v3h3" stroke="#e4e6ea" fill="none" /></svg>
          <svg width="20" height="20" viewBox="0 0 20 20"><path d="M0 2h20v2.500H0zM0 9h20v2.500H0zM0 16h20v2.500H0z" fill="#dfe2e6" /></svg>
        </div>
      </div>
    </div>
  );
}

export default function App() {
  return (
    <div className="w-[1920px] h-[1027px] overflow-hidden flex flex-col font-['Noto_Sans','Noto_Sans_CJK_SC',sans-serif]">
      <TitleBar />
      <RibbonTabs />
      <Ribbon />
      <DocTabs />
      <Canvas />
      <StatusBar />
    </div>
  );
}
